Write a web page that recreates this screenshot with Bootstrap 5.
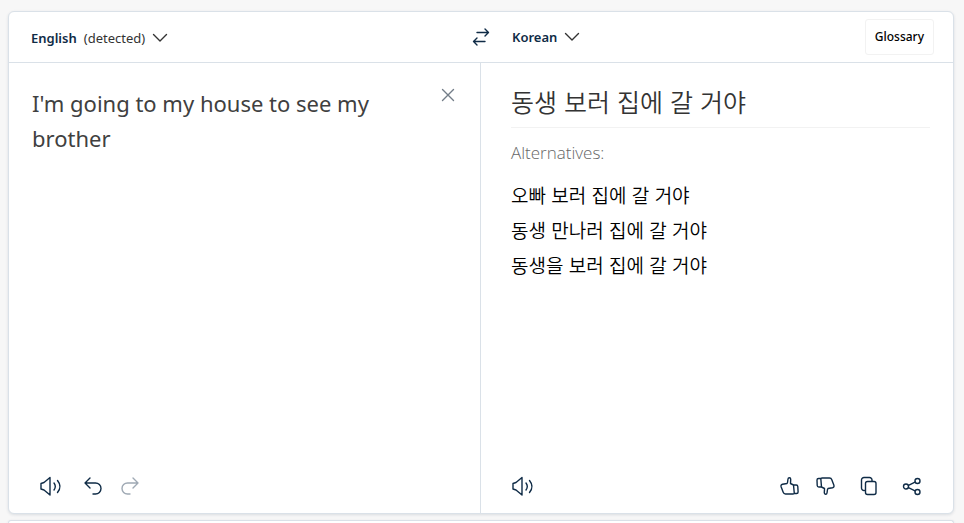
<!DOCTYPE html>
<html lang="en">
<head>
<meta charset="utf-8">
<meta name="viewport" content="width=device-width, initial-scale=1">
<title>Translator</title>
<link href="https://cdn.jsdelivr.net/npm/bootstrap@5.3.0/dist/css/bootstrap.min.css" rel="stylesheet">
<style>
  :root { --line: #dae1e8; --navy: #0f2b46; --ink: #333; }
  body { background: #f7f7f7; font-family: "Noto Sans", "Noto Sans CJK KR", sans-serif; color: var(--ink); padding: 11px 10px 0 8px; }
  .panel { border: 1px solid var(--line); border-radius: 6px; background: #fff; box-shadow: 0 1px 3px rgba(15, 43, 70, .12); }
  .panel-head { min-height: 51px; border-bottom: 1px solid var(--line); }
  .side { flex: 1 1 0; min-width: 0; }
  .lang { font-size: 13px; line-height: 20px; color: var(--navy); gap: 7px; }
  .lang b { font-weight: 600; }
  .lang .note { color: var(--ink); }
  .plain { border: 0; background: none; padding: 0; color: var(--navy); display: inline-flex; align-items: center; }
  .plain:disabled { color: #9fa9b4; }
  .plain svg { display: block; fill: none; stroke: currentColor; stroke-width: 1.4; stroke-linecap: round; stroke-linejoin: round; }
  .lang svg { color: var(--ink); }
  .pad-l { padding-left: 22px; }
  .glossary { font-size: 12px; line-height: 20px; font-weight: 500; color: #000; border: 1px solid #f2f2f2; border-radius: 3px; padding: 7px 9px; margin-right: 19px; background: #fff; }
  .pane { min-height: 450px; }
  .pane-source { border-right: 1px solid var(--line); }
  .source-text { border: 0; outline: 0; resize: none; background: none; color: #404040; font-size: 22px; line-height: 35px; padding: 23px 0 0 23px; min-width: 0; overflow: hidden; }
  .clear { color: #737d88; margin: 25px 25px 0 0; }
  .target { padding: 20px 23px 0 30px; }
  .target-text { font-size: 25px; line-height: 36px; padding-bottom: 8px; border-bottom: 1px solid #f2f2f2; }
  .target-text, .alt { font-family: "Noto Sans CJK KR", sans-serif; font-weight: 350; }
  .alt-title { font-family: "Open Sans", sans-serif; font-weight: 300; font-size: 17px; line-height: 24px; color: #666; margin: 13px 0 12px; }
  .alt { font-size: 19px; line-height: 35px; color: #000; }
  .tools { padding: 0 31px 16px 30px; }
  .gap-tools { gap: 19px; }
  .below { min-height: 3px; margin-top: 6px; }
</style>
<script defer src="https://cdn.jsdelivr.net/npm/bootstrap@5.3.0/dist/js/bootstrap.bundle.min.js"></script>
</head>
<body>
<main>
  <section class="panel">
    <header class="panel-head d-flex align-items-center">
      <div class="side pad-l">
        <button type="button" class="plain lang"><b>English</b><span class="note">(detected)</span>
          <svg width="16" height="10" viewBox="0 0 16 10"><path d="M1.500 1.500 8 8l6.500-6.500"/></svg></button>
      </div>
      <button type="button" class="plain" aria-label="Swap languages">
        <svg width="18" height="20" viewBox="0 0 18 20"><path d="M5 5.500h11.500M13 2l3.500 3.500L13 9M13 14.500H1.500M5 11l-3.500 3.500L5 18"/></svg></button>
      <div class="side pad-l d-flex align-items-center justify-content-between">
        <button type="button" class="plain lang"><b>Korean</b>
          <svg width="16" height="10" viewBox="0 0 16 10"><path d="M1.500 1.500 8 8l6.500-6.500"/></svg></button>
        <button type="button" class="glossary">Glossary</button>
      </div>
    </header>
    <div class="row g-0">
      <div class="col-6 pane pane-source d-flex flex-column">
        <div class="d-flex flex-grow-1 align-items-start">
          <textarea class="source-text flex-grow-1 align-self-stretch" aria-label="Source text" spellcheck="false">I'm going to my house to see my brother</textarea>
          <button type="button" class="plain clear" aria-label="Clear text">
            <svg width="14" height="14" viewBox="0 0 14 14"><path d="m1.500 1.500 11 11m0-11-11 11"/></svg></button>
        </div>
        <div class="tools d-flex align-items-center gap-tools">
          <button type="button" class="plain" aria-label="Listen to source">
            <svg width="26" height="22" viewBox="0 0 26 22"><path d="M2 8.500v5.500l3 1 6 5V2.500l-6 5zM15 8c1.700 2.300 1.700 4.700 0 7M18.500 5.500c3.300 4 3.300 8 0 12"/></svg></button>
          <button type="button" class="plain" aria-label="Undo">
            <svg width="18" height="20" viewBox="0 0 18 20"><path d="M6 2 1 7l5 5M1 7h10.500a5.500 5.500 0 0 1 0 11H9"/></svg></button>
          <button type="button" class="plain" aria-label="Redo" disabled>
            <svg width="18" height="20" viewBox="0 0 18 20"><path d="m12 2 5 5-5 5M17 7H6.500a5.500 5.500 0 0 0 0 11H9"/></svg></button>
        </div>
      </div>
      <div class="col-6 pane d-flex flex-column">
        <div class="target flex-grow-1" lang="ko">
          <p class="target-text m-0">동생 보러 집에 갈 거야</p>
          <h2 class="alt-title" lang="en">Alternatives:</h2>
          <ul class="list-unstyled m-0">
            <li><button type="button" class="plain alt">오빠 보러 집에 갈 거야</button></li>
            <li><button type="button" class="plain alt">동생 만나러 집에 갈 거야</button></li>
            <li><button type="button" class="plain alt">동생을 보러 집에 갈 거야</button></li>
          </ul>
        </div>
        <div class="tools d-flex align-items-center justify-content-between">
          <button type="button" class="plain" aria-label="Listen to translation">
            <svg width="26" height="22" viewBox="0 0 26 22"><path d="M2 8.500v5.500l3 1 6 5V2.500l-6 5zM15 8c1.700 2.300 1.700 4.700 0 7M18.500 5.500c3.300 4 3.300 8 0 12"/></svg></button>
          <div class="d-flex align-items-center">
            <button type="button" class="plain me-3" aria-label="Good translation">
              <svg width="20" height="20" viewBox="0 0 20 20"><path d="M13.500 9h2.700q1.500 0 1.600 1.500l.3 5.500q0 1.500-1.500 1.500h-2.300zM13.500 9l-3-1.500.2-4.300C10.700 1.300 8.200 1.300 8 3l-.5 3.500-.5 1-4.500.8C1.200 8.600.7 9.500 1.100 10.700l2.100 5.600q.6 1.700 2.300 1.700h7.200q1.100 0 1.600-.5"/></svg></button>
            <button type="button" class="plain" aria-label="Bad translation">
              <svg width="20" height="20" viewBox="0 0 20 20"><path d="M5.500 11H2.800q-1.500 0-1.600-1.500L1 4q0-1.500 1.500-1.500h2.300zM5.500 11l3 1.500-.2 4.300c0 1.900 2.500 1.900 2.700.2l.5-3.500.5-1 4.500-.8c1.300-.3 1.800-1.200 1.400-2.400l-2.100-5.600Q15.200 2 13.500 2H6.300q-1.100 0-1.600.5"/></svg></button>
            <button type="button" class="plain mx-4" aria-label="Copy translation">
              <svg width="18" height="20" viewBox="0 0 18 20"><path d="M4.500 14.500H4A2.500 2.500 0 0 1 1.500 12V4A2.500 2.500 0 0 1 4 1.500h5.500A2.500 2.500 0 0 1 12 4v1"/><rect x="5.500" y="5.500" width="10.500" height="13" rx="2"/></svg></button>
            <button type="button" class="plain" aria-label="Share translation">
              <svg width="20" height="20" viewBox="0 0 20 20"><circle cx="4" cy="10.500" r="2.500"/><circle cx="15.500" cy="5" r="2.500"/><circle cx="15.500" cy="16" r="2.500"/><path d="m6.500 9.300 6.500-3.100M6.500 11.700l6.500 3.100"/></svg></button>
          </div>
        </div>
      </div>
    </div>
  </section>
  <section class="panel below border-bottom-0 rounded-bottom-0" aria-label="Dictionary"></section>
</main>
</body>
</html>
